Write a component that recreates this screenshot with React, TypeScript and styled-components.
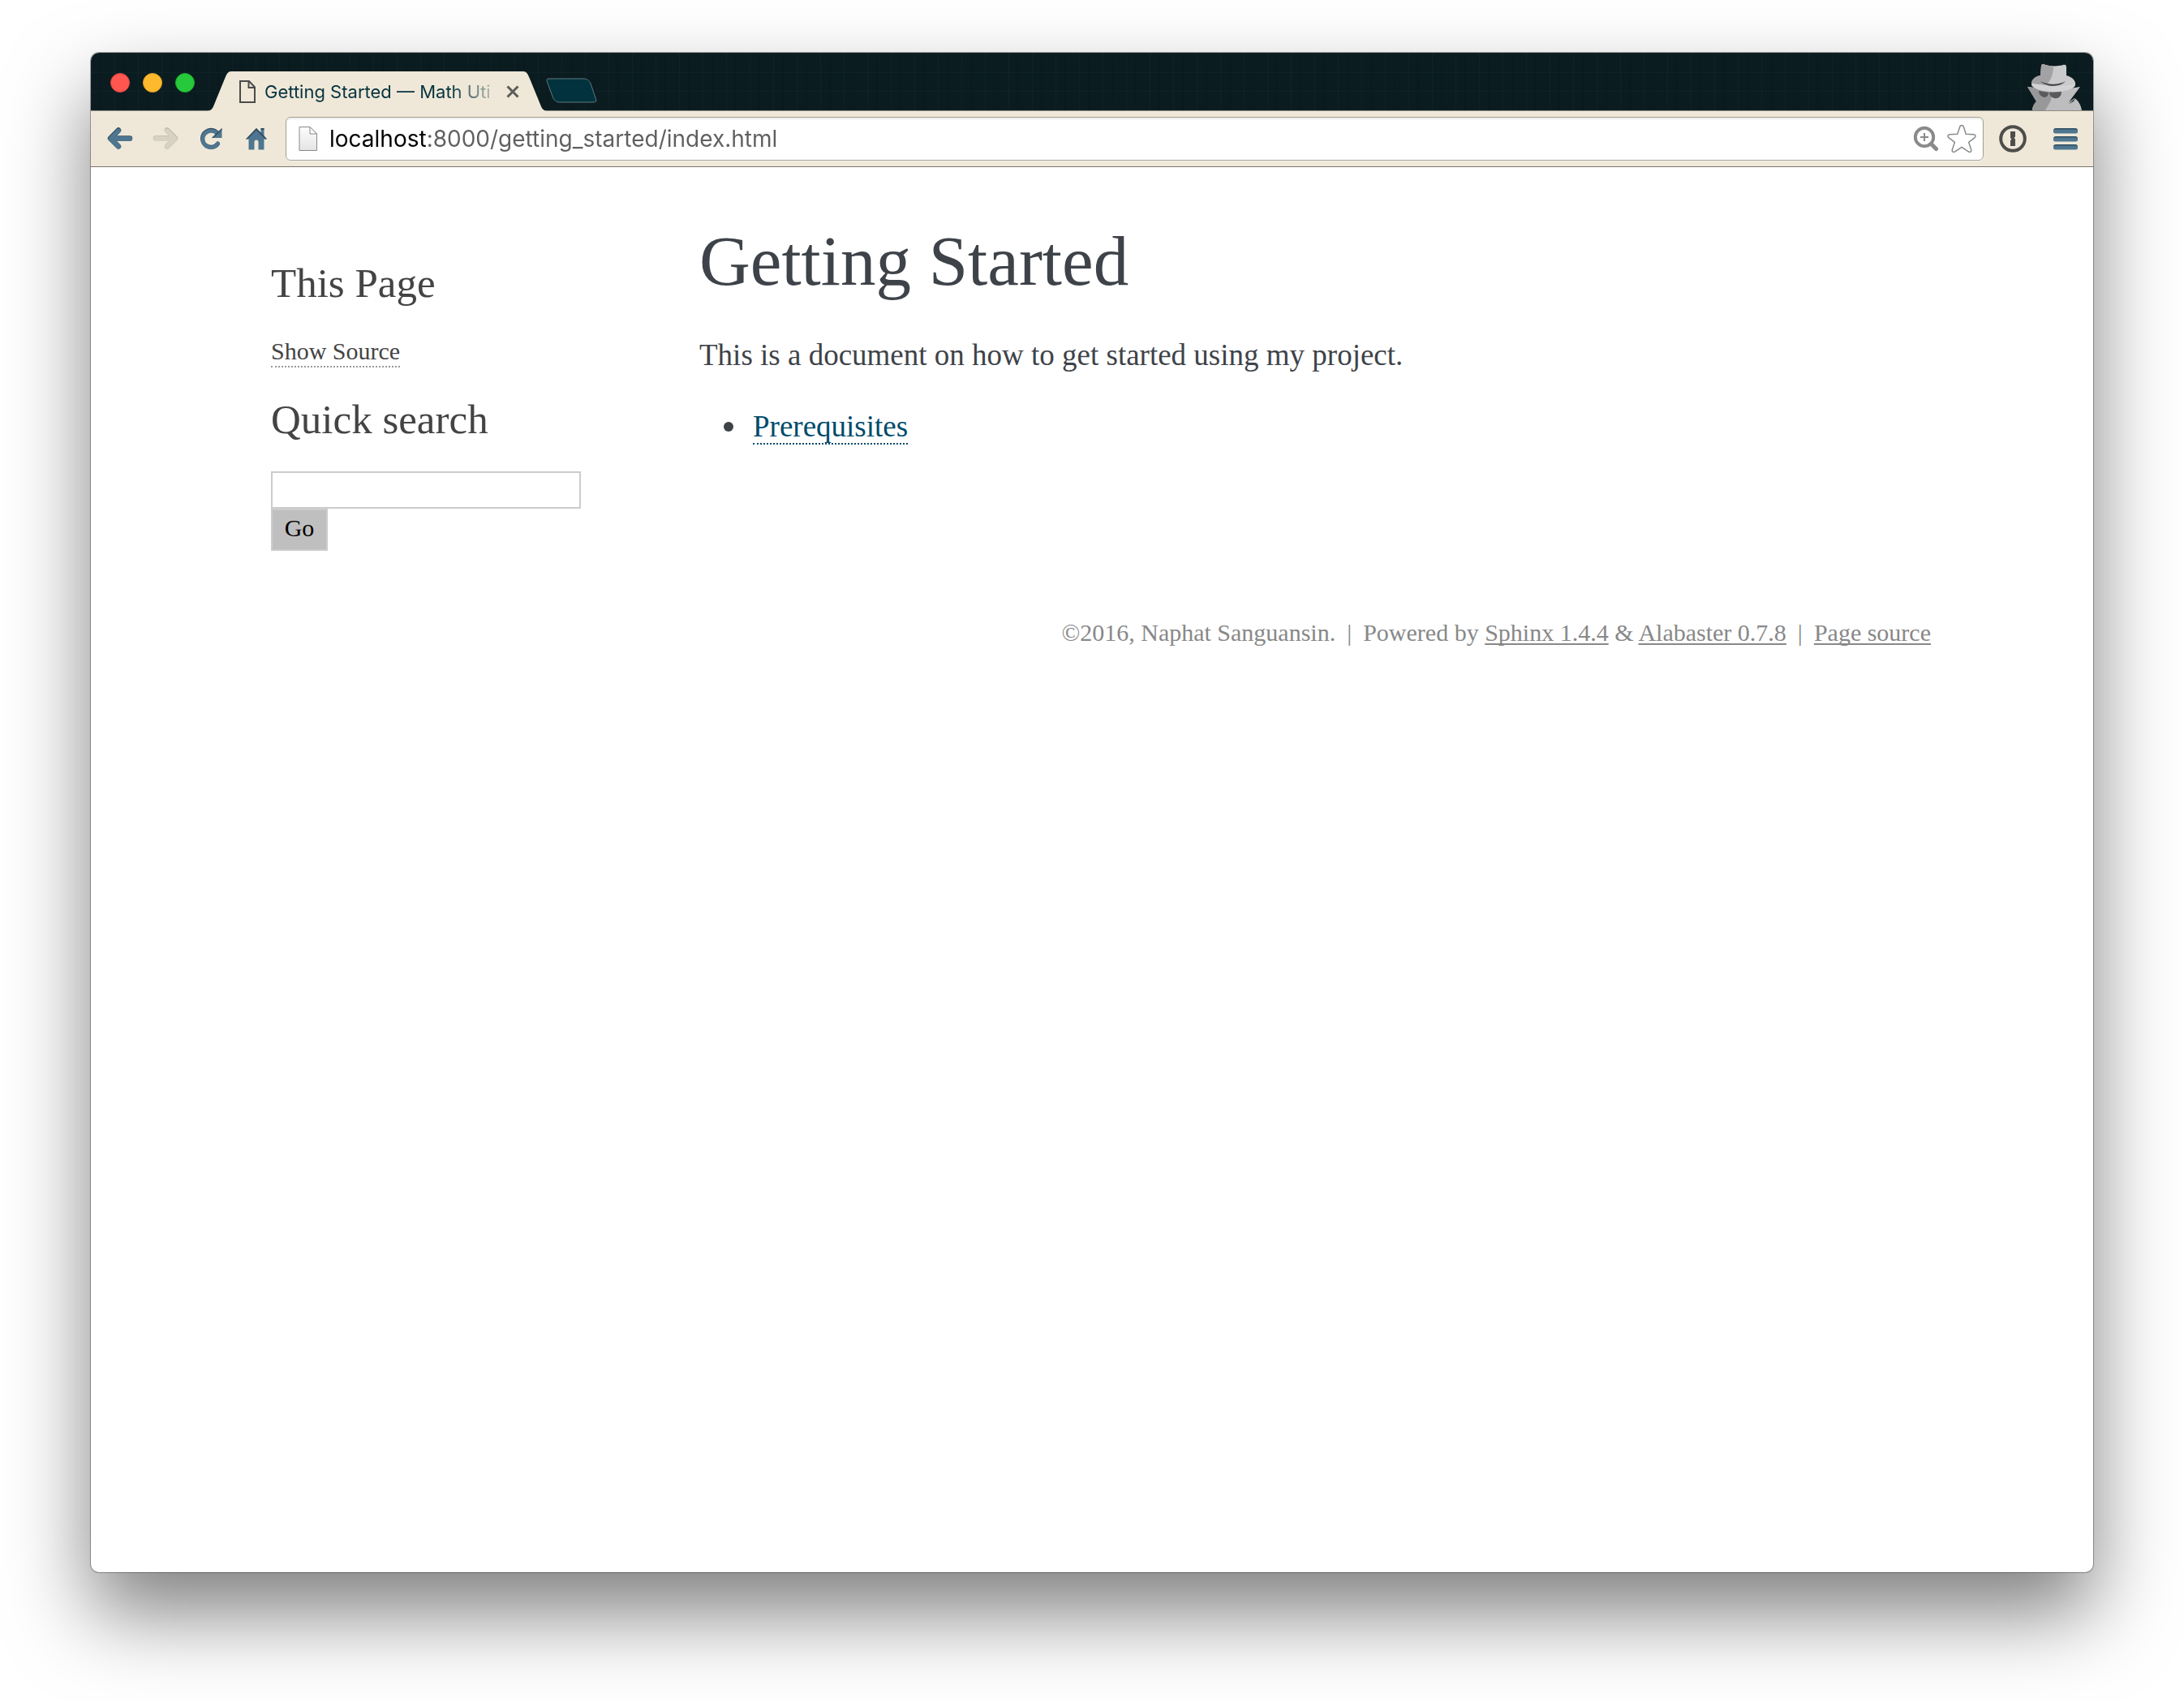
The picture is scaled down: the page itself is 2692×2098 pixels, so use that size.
import React from "react";
import styled, { createGlobalStyle, css } from "styled-components";

const serif = `"Goudy Old Style", "Liberation Serif", "Times New Roman", serif`;
const sans = `Inter, "Helvetica Neue", "Liberation Sans", sans-serif`;

const color = {
  chrome: "#efe8d8",
  strip: "#0b1c20",
  steel: "#4f7690",
  steelDark: "#2f4c60",
  ink: "#3e4349",
  side: "#444444",
  link: "#004b6b",
  muted: "#888888",
};

const GlobalStyle = createGlobalStyle`
  *, *::before, *::after { box-sizing: border-box; }
  body { margin: 0; background: #fff; }
  h1, h3, p, ul { margin: 0; font-weight: 400; }
  button { padding: 0; border: 0; background: none; font: inherit; }
  svg { display: block; flex: none; }
`;

const Desktop = styled.div`
  display: flex;
  flex-direction: column;
  min-height: 100vh;
  padding: 65px 112px 160px;
`;

const Window = styled.div`
  flex: 1;
  display: flex;
  flex-direction: column;
  border-radius: 10px;
  background: #fff;
  overflow: hidden;
  box-shadow: 0 0 0 1px rgba(0, 0, 0, 0.3), 0 50px 100px rgba(0, 0, 0, 0.5);
`;

const TabStrip = styled.header`
  display: flex;
  align-items: flex-end;
  height: 71px;
  padding: 0 13px 0 24px;
  background-color: ${color.strip};
  background-image:
    repeating-linear-gradient(90deg, rgba(50, 85, 90, 0.1) 0 1px, transparent 1px 11px, rgba(0, 0, 0, 0.1) 11px 13px, transparent 13px 29px),
    repeating-linear-gradient(0deg, rgba(50, 85, 90, 0.1) 0 1px, transparent 1px 9px, rgba(0, 0, 0, 0.1) 9px 10px, transparent 10px 23px);
`;

const Lights = styled.div`
  display: flex;
  gap: 16px;
  padding-bottom: 22px;
  margin-right: 16px;
`;

const Light = styled.button<{ $fill: string; $rim: string }>`
  width: 24px;
  height: 24px;
  border-radius: 50%;
  background: ${(p) => p.$fill};
  border: 1px solid ${(p) => p.$rim};
`;

const Tab = styled.div`
  display: flex;
  height: 49px;
  margin-bottom: -1px;
  position: relative;
  z-index: 1;
`;

const TabBody = styled.div`
  display: flex;
  align-items: center;
  width: 360px;
  padding-left: 10px;
  background: ${color.chrome};
`;

const TabTitle = styled.span`
  flex: 1;
  margin: 0 12px 0 11px;
  white-space: nowrap;
  font: 400 22px/32px ${sans};
  color: #07333f;
  mask-image: linear-gradient(90deg, #000 80%, transparent 104%);
`;

const TabClose = styled.button`
  width: 16px;
  margin-right: 5px;
`;

const NewTab = styled.button`
  margin: 0 auto 9px -1px;
`;

const Toolbar = styled.nav`
  display: flex;
  align-items: center;
  height: 70px;
  padding: 0 18px 0 20px;
  background: ${color.chrome};
  border-top: 1px solid #8d8a80;
  border-bottom: 1px solid #7b766a;
`;

const NavButtons = styled.div`
  display: flex;
  gap: 24px;
  margin-right: 20px;
`;

const ToolButton = styled.button`
  display: flex;
  align-items: center;
  justify-content: center;
  min-width: 32px;
  height: 36px;
`;

const Omnibox = styled.div`
  flex: 1;
  display: flex;
  align-items: center;
  gap: 10px;
  height: 54px;
  padding: 0 8px 0 15px;
  background: #fff;
  border: 1px solid #a5a196;
  border-radius: 6px;
  box-shadow: inset 0 2px 2px rgba(0, 0, 0, 0.08), 0 1px 0 rgba(255, 255, 255, 0.6);
`;

const Address = styled.input`
  flex: 1;
  min-width: 0;
  height: 44px;
  padding: 0;
  margin-left: 4px;
  border: 0;
  outline: 0;
  font: 400 28px/44px ${sans};
  color: #5f5f5f;
  background: linear-gradient(90deg, #000 121px, #5f5f5f 121px);
  background-clip: text;
  -webkit-text-fill-color: transparent;
`;

const Extensions = styled.div`
  display: flex;
  gap: 32px;
  margin-left: 19px;
`;

const Page = styled.div`
  width: 100%;
  max-width: 2080px;
  margin: 0 auto;
  padding: 64px 6px 0 28px;
  font-family: ${serif};
`;

const Columns = styled.div`
  display: grid;
  grid-template-columns: 382px 1fr;
  column-gap: 146px;
`;

const Sidebar = styled.aside`
  display: flex;
  flex-direction: column;
  align-items: flex-start;
  gap: 34px;
  padding-top: 49px;
  color: ${color.side};
  font-size: 30px;
  line-height: 40px;
`;

const SideHeading = styled.h3`
  font-size: 51px;
  line-height: 60px;
`;

const dotted = css`
  text-decoration: none;
  border-bottom: 2px dotted;
`;

const SideLink = styled.a`
  ${dotted}
  padding-bottom: 2px;
  color: ${color.side};
  border-color: #999;
`;

const SearchForm = styled.form`
  display: flex;
  flex-direction: column;
  align-items: flex-start;
  width: 100%;
`;

const SearchInput = styled.input`
  width: 100%;
  height: 46px;
  padding: 2px 8px;
  border: 2px solid #ccc;
  font: 30px/38px ${serif};
`;

const GoButton = styled.button`
  width: 70px;
  height: 52px;
  padding-bottom: 4px;
  border: 2px solid #ccc;
  background: #bfbfbf;
  color: #000;
`;

const Article = styled.main`
  color: ${color.ink};
  font-size: 37px;
  line-height: 52px;
`;

const Title = styled.h1`
  font-size: 87px;
  line-height: 104px;
  margin-bottom: 38px;
`;

const Toc = styled.ul`
  margin-top: 36px;
  padding-left: 30px;
  list-style: none;
`;

const TocItem = styled.li`
  display: flex;
  align-items: center;
  gap: 24px;

  &::before {
    content: "";
    width: 12px;
    height: 12px;
    border-radius: 50%;
    background: ${color.ink};
  }
`;

const TocLink = styled.a`
  ${dotted}
  color: ${color.link};
`;

const Footer = styled.footer`
  display: flex;
  justify-content: flex-end;
  gap: 14px;
  margin-top: 81px;
  color: ${color.muted};
  font-size: 30px;
  line-height: 40px;
`;

const FooterLink = styled.a`
  color: ${color.muted};
  text-decoration: underline;
  text-decoration-thickness: 2px;
  text-underline-offset: 3px;
  text-decoration-skip-ink: none;
`;

const TabEdge = ({ flip }: { flip?: boolean }) => (
  <svg width="29" height="49" viewBox="0 0 29 49" aria-hidden="true">
    <path
      transform={flip ? "translate(29 0) scale(-1 1)" : undefined}
      d="M0 49C4 48.500 6 46 7.500 42L21 9C23.500 3 25 0 29 0V49Z"
      fill={color.chrome}
    />
  </svg>
);

const TabPageIcon = () => (
  <svg width="20" height="28" viewBox="0 0 20 28" fill="none" stroke="#4b4b4b" strokeWidth="2" aria-hidden="true">
    <path d="M1 1H12L19 8.500V27H1Z" />
    <path d="M11.500 1V9H19" />
  </svg>
);

const CloseIcon = () => (
  <svg width="16" height="16" viewBox="0 0 16 16" stroke="#5c5c58" strokeWidth="3" aria-hidden="true">
    <path d="M1.500 1.500L14.500 14.500M14.500 1.500L1.500 14.500" />
  </svg>
);

const NewTabShape = () => (
  <svg width="63" height="31" viewBox="0 0 63 31" aria-hidden="true">
    <path
      d="M3 1H46C51 1 53.500 3.500 55 7L61.500 26C62.500 29 61.500 30 59 30H17C12 30 10 27.500 8.500 24L1.500 5C.500 2.500 1 1 3 1Z"
      fill="#02323d"
      stroke="#5f7a80"
    />
  </svg>
);

const ArrowIcon = ({ forward }: { forward?: boolean }) => (
  <svg width="32" height="28" viewBox="0 0 32 28" fill="none" strokeLinecap="round" strokeLinejoin="round" aria-hidden="true">
    <g transform={forward ? "translate(32 0) scale(-1 1)" : undefined} strokeWidth="6.500">
      <path d="M14 3.500L4 13.500L14 23.500M5 13.500H28" stroke={forward ? "#bdb8a8" : color.steelDark} />
      <path d="M14 4.500L4.500 14L14 23.500M5 14H28" stroke={forward ? "#d8d2c2" : color.steel} strokeWidth="5.800" />
    </g>
  </svg>
);

const ReloadIcon = () => (
  <svg width="28" height="28" viewBox="0 0 28 28" aria-hidden="true">
    <path d="M21.500 6.500A10.500 10.500 0 1 0 22.500 20" fill="none" stroke={color.steelDark} strokeWidth="5" strokeLinecap="round" />
    <path d="M21.500 7.500A10.200 10.200 0 1 0 22.500 20.500" fill="none" stroke={color.steel} strokeWidth="4.800" strokeLinecap="round" />
    <path d="M27.500 1V13H15Z" fill={color.steel} />
    <path d="M27.500 1L26 2.500L15 13H17L27.500 3Z" fill={color.steelDark} />
  </svg>
);

const HomeIcon = () => (
  <svg width="26" height="28" viewBox="0 0 26 28" aria-hidden="true">
    <path d="M13 1L0 14.500H3.500V27.500H10.500V18C10.500 16.500 11.500 15.500 13 15.500S15.500 16.500 15.500 18V27.500H22.500V14.500H26L22.500 10.500V1H18.500V6.500Z" fill={color.steel} />
    <path d="M13 1L0 14.500H2L13 3.500L24 14.500H26L22.500 10.500L18.500 6.500ZM18.500 1H22.500V3H18.500Z" fill={color.steelDark} />
  </svg>
);

const PageIcon = () => (
  <svg width="24" height="31" viewBox="0 0 24 31" aria-hidden="true">
    <defs>
      <linearGradient id="sheet" x1="0" y1="0" x2="0" y2="1">
        <stop offset="0" stopColor="#fdfdfd" />
        <stop offset="1" stopColor="#e4e4e4" />
      </linearGradient>
    </defs>
    <path d="M1 .500H14L22.500 9V29.500H1Z" fill="url(#sheet)" stroke="#8a8a8a" />
    <path d="M14 .500V9H22.500Z" fill="#fff" stroke="#8a8a8a" />
  </svg>
);

const ZoomIcon = () => (
  <svg width="32" height="32" viewBox="0 0 32 32" fill="none" stroke="#8a8a8a" aria-hidden="true">
    <circle cx="14" cy="14" r="11.200" strokeWidth="3.900" />
    <path d="M22.500 22.500L28.500 28.500" strokeWidth="5" strokeLinecap="round" />
    <path d="M9 14H19M14 9V19" strokeWidth="2" />
  </svg>
);

const StarIcon = () => (
  <svg width="36" height="36" viewBox="0 0 36 36" fill="#fff" stroke="#8a8a8a" strokeWidth="1.500" strokeLinejoin="round" aria-hidden="true">
    <path d="M18 1.500C19.300 1.500 20.200 2.500 20.600 4L23.200 12.300L32.500 12.700C35.300 12.900 35.800 15.200 33.800 16.800L26.600 22.300L29.600 31.200C30.400 34 28.400 35.200 26.200 33.800L18 28.400L9.800 33.800C7.600 35.200 5.600 34 6.400 31.200L9.400 22.300L2.200 16.800C.200 15.200 .700 12.900 3.500 12.700L12.800 12.300L15.400 4C15.800 2.500 16.700 1.500 18 1.500Z" />
  </svg>
);

const KeyholeIcon = () => (
  <svg width="34" height="34" viewBox="0 0 34 34" aria-hidden="true">
    <circle cx="17" cy="17" r="14.800" fill="none" stroke="#4d4d4a" strokeWidth="4" />
    <path d="M14 8H20V14.500L18.500 16L20 17.500V26H14V19L15.500 17.500L14 16Z" fill="#4d4d4a" />
  </svg>
);

const MenuIcon = () => (
  <svg width="30" height="27" viewBox="0 0 30 27" aria-hidden="true">
    {[0, 10, 20].map((y) => (
      <g key={y}>
        <rect y={y} width="30" height="6" rx="3" fill={color.steelDark} />
        <rect y={y + 1.5} width="30" height="5" rx="2.500" fill={color.steel} />
      </g>
    ))}
  </svg>
);

const IncognitoIcon = () => (
  <svg width="68" height="57" viewBox="0 0 68 57" aria-hidden="true">
    <path d="M0 28L17 30L52 30L65 28L51 47L58 42C62 44 66 50 67 57H6C6 53 8 49 11 46Z" fill="#bdbdbf" />
    <path d="M0 28L17 30L30 34L29 45L22 57H6C6 53 8 49 11 46Z" fill="#98989a" />
    <path d="M51 49L59 42L57 46Z" fill="#333" />
    <path d="M17 2C17 0 19 0 21 .500C28 3 38 3 44 1C47 .500 48 1 48 4V14C55 16 60 20 59 26C57 31 46 34 33 34C18 34 5 30 5 24C5 19 10 15 16 14Z" fill="#cacacc" />
    <path d="M17 2C17 0 19 0 21 .500C25 2 28 2.300 32 2.500C32 12 29 22 22 26C14 25 8 24 5 24C5 19 10 15 16 14Z" fill="#a2a2a4" />
    <path d="M5 25C14 24 22 27 33 27C44 27 52 26 59 25C58 31 46 34 33 34C18 34 6 30 5 25Z" fill="#d2d2d4" />
    <path d="M16 21C26 26 38 26 47 21C40 29 24 29 16 21Z" fill="#4a4a4c" />
    <path d="M14 33L26 35C26 41 21 42 18 40C15 38 14 36 14 33ZM27 35L42 34C42 40 38 43 33 42C29 41 27 38 27 35Z" fill="#5a5a5c" />
  </svg>
);

export default function App() {
  return (
    <Desktop>
      <GlobalStyle />
      <Window>
        <TabStrip>
          <Lights>
            <Light aria-label="Close window" $fill="#ff5650" $rim="#e0443e" />
            <Light aria-label="Minimize window" $fill="#ffb92c" $rim="#dea123" />
            <Light aria-label="Zoom window" $fill="#27c93c" $rim="#1aab29" />
          </Lights>
          <Tab>
            <TabEdge />
            <TabBody>
              <TabPageIcon />
              <TabTitle>Getting Started — Math Uti</TabTitle>
              <TabClose aria-label="Close tab">
                <CloseIcon />
              </TabClose>
            </TabBody>
            <TabEdge flip />
          </Tab>
          <NewTab aria-label="New tab">
            <NewTabShape />
          </NewTab>
          <IncognitoIcon />
        </TabStrip>
        <Toolbar>
          <NavButtons>
            <ToolButton aria-label="Back"><ArrowIcon /></ToolButton>
            <ToolButton aria-label="Forward"><ArrowIcon forward /></ToolButton>
            <ToolButton aria-label="Reload"><ReloadIcon /></ToolButton>
            <ToolButton aria-label="Home"><HomeIcon /></ToolButton>
          </NavButtons>
          <Omnibox>
            <PageIcon />
            <Address aria-label="Address" defaultValue="localhost:8000/getting_started/index.html" />
            <ToolButton aria-label="Zoom"><ZoomIcon /></ToolButton>
            <ToolButton aria-label="Bookmark"><StarIcon /></ToolButton>
          </Omnibox>
          <Extensions>
            <ToolButton aria-label="Password manager"><KeyholeIcon /></ToolButton>
            <ToolButton aria-label="Menu"><MenuIcon /></ToolButton>
          </Extensions>
        </Toolbar>
        <Page>
          <Columns>
            <Sidebar>
              <SideHeading>This Page</SideHeading>
              <div><SideLink href="#source">Show Source</SideLink></div>
              <SideHeading id="search-heading">Quick search</SideHeading>
              <SearchForm>
                <SearchInput type="text" aria-labelledby="search-heading" />
                <GoButton type="submit">Go</GoButton>
              </SearchForm>
            </Sidebar>
            <Article>
              <Title>Getting Started</Title>
              <p>This is a document on how to get started using my project.</p>
              <Toc>
                <TocItem>
                  <span><TocLink href="#prerequisites">Prerequisites</TocLink></span>
                </TocItem>
              </Toc>
            </Article>
          </Columns>
          <Footer>
            <span>©2016, Naphat Sanguansin.</span>
            <span>|</span>
            <span>
              Powered by <FooterLink href="#sphinx">Sphinx 1.4.4</FooterLink> &amp;{" "}
              <FooterLink href="#alabaster">Alabaster 0.7.8</FooterLink>
            </span>
            <span>|</span>
            <FooterLink href="#page-source">Page source</FooterLink>
          </Footer>
        </Page>
      </Window>
    </Desktop>
  );
}
